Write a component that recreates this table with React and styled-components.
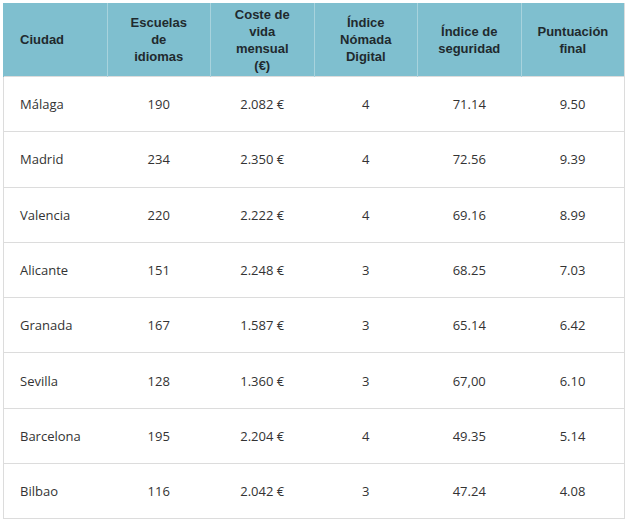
import React from "react";
import styled, { createGlobalStyle } from "styled-components";

const GlobalStyle = createGlobalStyle`
	body {
		margin: 0;
		padding: 3px 2px 0 3px;
		background: #ffffff;
	}
`;

const Table = styled.table`
	width: 622px;
	border-collapse: collapse;
	table-layout: fixed;
	border: 1px solid #dcdcdc;
	border-top: none;
`;

const HeadCell = styled.th`
	background: #7fbfcf;
	color: #1f2a2e;
	font-family: "Liberation Sans", Arial, sans-serif;
	font-weight: bold;
	font-size: 13px;
	line-height: 17px;
	height: 73px;
	padding: 0 16px;
	text-align: ${(p) => (p.$left ? "left" : "center")};
	border-left: 1px solid #a8d3dd;
	&:first-child {
		border-left: 1px solid #7fbfcf;
	}
`;

const Line = styled.span`
	display: block;
	white-space: nowrap;
`;

const Row = styled.tr`
	border-top: 1px solid #dcdcdc;
`;

const Cell = styled.td`
	font-family: "Open Sans", "Noto Sans", sans-serif;
	font-size: 13px;
	color: #333;
	height: 54.3px;
	padding: 0 8px;
	text-align: ${(p) => (p.$left ? "left" : "center")};
	padding-left: ${(p) => (p.$left ? "16px" : "8px")};
`;

const headers = [
	["Ciudad"],
	["Escuelas", "de", "idiomas"],
	["Coste de", "vida", "mensual", "(€)"],
	["Índice", "Nómada", "Digital"],
	["Índice de", "seguridad"],
	["Puntuación", "final"],
];

const rows = [
	["Málaga", "190", "2.082 €", "4", "71.14", "9.50"],
	["Madrid", "234", "2.350 €", "4", "72.56", "9.39"],
	["Valencia", "220", "2.222 €", "4", "69.16", "8.99"],
	["Alicante", "151", "2.248 €", "3", "68.25", "7.03"],
	["Granada", "167", "1.587 €", "3", "65.14", "6.42"],
	["Sevilla", "128", "1.360 €", "3", "67,00", "6.10"],
	["Barcelona", "195", "2.204 €", "4", "49.35", "5.14"],
	["Bilbao", "116", "2.042 €", "3", "47.24", "4.08"],
];

function App() {
	return (
		<>
			<GlobalStyle />
			<Table>
				<thead>
					<tr>
						{headers.map((h, i) => (
							<HeadCell key={i} $left={i === 0}>
								{h.map((line) => (
									<Line key={line}>{line}</Line>
								))}
							</HeadCell>
						))}
					</tr>
				</thead>
				<tbody>
					{rows.map((r) => (
						<Row key={r[0]}>
							{r.map((v, i) => (
								<Cell key={i} $left={i === 0}>
									{v}
								</Cell>
							))}
						</Row>
					))}
				</tbody>
			</Table>
		</>
	);
}

export default App;
